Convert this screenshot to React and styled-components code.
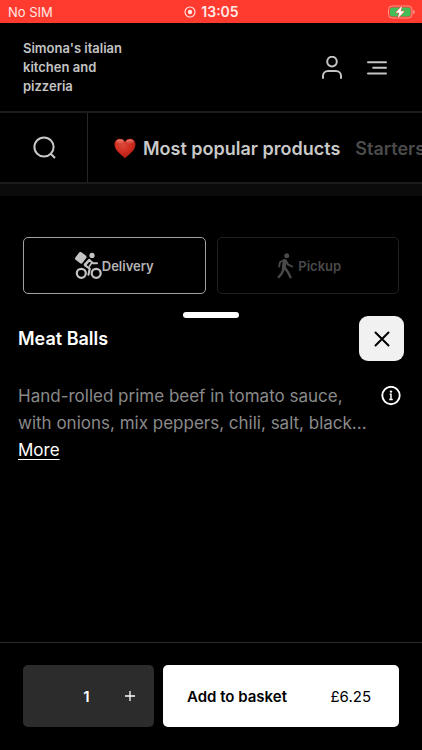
import React, { useState } from "react";
import styled, { createGlobalStyle } from "styled-components";

const GlobalStyle = createGlobalStyle`
  *, *::before, *::after { box-sizing: border-box; }
  body { margin: 0; background: #000; }
  button { font: inherit; color: inherit; background: none; border: 0; padding: 0; cursor: pointer; }
  h1, h2, p { margin: 0; }
  svg { display: block; flex: none; }
`;

const Page = styled.div`
  min-height: 100vh;
  display: flex;
  flex-direction: column;
  background: #000;
  color: #fff;
  font-family: Inter, "Liberation Sans", sans-serif;
  overflow: hidden;
`;

const StatusBar = styled.div`
  display: grid;
  grid-template-columns: 1fr auto 1fr;
  align-items: center;
  height: 23px;
  padding: 0 7px 0 8px;
  background: #ff3b30;
  color: #ffe9e6;
  font-size: 13px;
`;

const Clock = styled.div`
  display: flex;
  align-items: center;
  gap: 5px;
  font-size: 14px;
  font-weight: 600;
`;

const Battery = styled.div`
  justify-self: end;
`;

const Header = styled.header`
  display: flex;
  align-items: center;
  justify-content: space-between;
  padding: 16px 34px 15px 23px;
  border-bottom: 2px solid #1b1b1b;
  color: #c4c4c4;
`;

const Brand = styled.h1`
  max-width: 120px;
  font-size: 13px;
  line-height: 19px;
  font-weight: 600;
`;

const HeaderActions = styled.div`
  display: flex;
  gap: 23px;
`;

const IconButton = styled.button`
  display: flex;
  align-items: center;
  justify-content: center;
`;

const CategoryBar = styled.nav`
  display: flex;
  height: 71px;
  border-bottom: 2px solid #1b1b1b;
  color: #c9c9c9;
`;

const SearchButton = styled(IconButton)`
  flex: none;
  width: 88px;
  border-right: 1px solid #262626;
`;

const CategoryList = styled.div`
  display: flex;
  flex: 1;
  min-width: 0;
  align-items: center;
  gap: 15px;
  padding: 2px 0 0 26px;
  overflow-x: auto;
  scrollbar-width: none;
`;

const CategoryLink = styled.a`
  display: flex;
  flex: none;
  align-items: center;
  gap: 7px;
  font-size: 18px;
  line-height: 24px;
  font-weight: 600;
  text-decoration: none;
  white-space: nowrap;
  color: ${(p) => (p.$active ? "#c9c9c9" : "#4b4b4b")};
`;

const HeroStrip = styled.div`
  height: 12px;
  background: #0c0b0b;
`;

const ServiceOptions = styled.div`
  display: grid;
  grid-template-columns: 1fr 1fr;
  gap: 11px;
  padding: 41px 23px 18px;
`;

const ServiceButton = styled.button`
  display: flex;
  align-items: center;
  justify-content: center;
  height: 57px;
  border: 1px solid ${(p) => (p.$active ? "#a2a2a2" : "#202020")};
  border-radius: 5px;
  font-size: 13px;
  font-weight: 600;
  color: ${(p) => (p.$active ? "#b5b5b5" : "#4a4a4a")};
`;

const Sheet = styled.section`
  flex: 1;
  display: flex;
  flex-direction: column;
  padding: 0 18px;
`;

const Handle = styled.div`
  width: 56px;
  height: 6px;
  align-self: center;
  border-radius: 3px;
  background: #fff;
`;

const SheetHeader = styled.div`
  display: flex;
  align-items: center;
  justify-content: space-between;
  margin-top: -2px;
`;

const Title = styled.h2`
  font-size: 18px;
  line-height: 24px;
  font-weight: 600;
`;

const CloseButton = styled(IconButton)`
  width: 45px;
  height: 45px;
  border-radius: 9px;
  background: #f1f1f1;
  color: #000;
`;

const DescriptionRow = styled.div`
  display: flex;
  align-items: flex-start;
  gap: 6px;
  padding-top: 22px;
`;

const Description = styled.div`
  flex: 1;
  min-width: 0;
  font-size: 17px;
  line-height: 27px;
  color: #8a8a8a;
`;

const MoreLink = styled.a`
  color: #fff;
  text-decoration: underline;
  text-decoration-thickness: 1px;
  text-underline-offset: 3px;
`;

const InfoButton = styled(IconButton)`
  padding: 3px;
`;

const Footer = styled.footer`
  display: flex;
  gap: 9px;
  padding: 22px 23px 23px;
  border-top: 1px solid #2c2c2c;
  font-size: 15px;
`;

const Stepper = styled.div`
  flex: 0 0 131px;
  display: grid;
  grid-template-columns: 1fr 36px 1fr;
  align-items: center;
  height: 62px;
  border-radius: 5px;
  background: #2c2c2c;
`;

const StepButton = styled(IconButton)`
  height: 100%;
  visibility: ${(p) => (p.$hidden ? "hidden" : "visible")};
`;

const Quantity = styled.output`
  padding-right: 4px;
  text-align: center;
  font-weight: 600;
`;

const AddButton = styled.button`
  flex: 1;
  display: flex;
  align-items: center;
  justify-content: space-between;
  height: 62px;
  padding: 0 28px 0 24px;
  border-radius: 5px;
  background: #fff;
  color: #000;
`;

const AddLabel = styled.span`
  font-weight: 600;
`;

function RecordIcon() {
  return (
    <svg width="12" height="12" viewBox="0 0 12 12" aria-hidden="true">
      <circle cx="6" cy="6" r="5" fill="none" stroke="currentColor" strokeWidth="1.1" />
      <circle cx="6" cy="6" r="2.2" fill="currentColor" />
    </svg>
  );
}

function BatteryIcon() {
  return (
    <svg width="27" height="14" viewBox="0 0 27 14" role="img" aria-label="Battery charging">
      <rect x="0.5" y="1" width="23.5" height="12" rx="3.5" fill="none" stroke="#ffb0a9" strokeOpacity=".75" />
      <rect x="2" y="2.5" width="20.5" height="9" rx="2" fill="#43bd58" />
      <path d="M25.2 5v4c1.1-.4 1.6-1.1 1.6-2s-.5-1.6-1.6-2z" fill="#ff9d95" />
      <path d="M14 .8 7.7 7.7h3.6L9.8 13.2 16.5 6.3h-3.8z" fill="#fff" stroke="#ff3b30" strokeWidth=".9" paintOrder="stroke" />
    </svg>
  );
}

function UserIcon() {
  return (
    <svg width="22" height="24" viewBox="0 0 22 24" fill="none" stroke="currentColor" strokeWidth="2" strokeLinecap="round" aria-hidden="true">
      <circle cx="11" cy="5.6" r="4.8" />
      <path d="M2 22v-2a5 5 0 0 1 5-5h8a5 5 0 0 1 5 5v2" />
    </svg>
  );
}

function MenuIcon() {
  return (
    <svg width="22" height="24" viewBox="0 0 22 24" fill="none" stroke="currentColor" strokeWidth="2" strokeLinecap="round" aria-hidden="true">
      <path d="M2 6.2h18M7.2 11.8h12.8M2 17.4h18" />
    </svg>
  );
}

function SearchIcon() {
  return (
    <svg width="24" height="24" viewBox="0 0 24 24" fill="none" stroke="currentColor" strokeWidth="2" aria-hidden="true">
      <circle cx="12" cy="11" r="9.6" />
      <path d="m18.7 17.7 4.3 4.3" />
    </svg>
  );
}

function HeartIcon() {
  return (
    <svg width="22" height="21" viewBox="0 0 22 21" aria-hidden="true">
      <defs>
        <radialGradient id="heart" cx=".4" cy=".3" r=".8">
          <stop offset="0" stopColor="#d9493b" />
          <stop offset=".5" stopColor="#cf2b20" />
          <stop offset="1" stopColor="#a01a10" />
        </radialGradient>
        <linearGradient id="shine" x1="0" y1="0" x2="0" y2="1">
          <stop offset="0" stopColor="#f0a08f" stopOpacity=".75" />
          <stop offset="1" stopColor="#f0a08f" stopOpacity="0" />
        </linearGradient>
      </defs>
      <path d="M11 20.5C9.5 18 .5 13.5 .5 6.3 .5 3 2.8 .7 5.9 .7c2.3 0 4.1 1.2 5.1 3.2C12 1.9 13.8 .7 16.1 .7c3.1 0 5.4 2.3 5.4 5.6C21.5 13.5 12.5 18 11 20.5z" fill="url(#heart)" />
      <ellipse cx="6" cy="3.7" rx="3.6" ry="2.3" fill="url(#shine)" />
      <ellipse cx="16" cy="3.7" rx="3.6" ry="2.3" fill="url(#shine)" />
    </svg>
  );
}

function DeliveryIcon() {
  return (
    <svg width="27" height="28" viewBox="0 0 27 28" fill="none" stroke="#c4c4c4" strokeLinecap="round" strokeLinejoin="round" aria-hidden="true">
      <rect x="1.3" y="1" width="9" height="9.6" rx="2" transform="rotate(38 5.8 5.8)" fill="#c4c4c4" stroke="none" />
      <circle cx="17" cy="3.4" r="2.6" fill="#c4c4c4" stroke="none" />
      <circle cx="6.3" cy="21.3" r="4.5" strokeWidth="2.2" />
      <circle cx="21.2" cy="21.3" r="4.5" strokeWidth="2.2" />
      <path d="m14.2 8.2-4.2 5.2 4.7 3.2-1.2 6" strokeWidth="2.2" />
      <path d="m9.7 12.5 4.5-4.6 3.8 3.4h4" strokeWidth="2" />
      <path d="m16.7 11-2.3 3.3" strokeWidth="1.6" />
    </svg>
  );
}

function WalkIcon() {
  return (
    <svg width="24" height="26" viewBox="-3 0 24 26" fill="none" stroke="currentColor" strokeLinecap="round" strokeLinejoin="round" aria-hidden="true">
      <circle cx="9.7" cy="2.8" r="2.5" fill="currentColor" stroke="none" />
      <path d="M7.8 8 6.7 15.5" strokeWidth="4" />
      <path d="m8 15 3 4.2 2.5 5" strokeWidth="2.4" />
      <path d="m6 17.5-1.3 3-2.9 3.5" strokeWidth="2.3" />
      <path d="M6.5 7.2 3 9.2l-.8 4.3" strokeWidth="1.9" />
      <path d="m8.7 7.5 2.5 4.2 4 1.8" strokeWidth="1.9" />
    </svg>
  );
}

function CloseIcon() {
  return (
    <svg width="16" height="16" viewBox="0 0 16 16" fill="none" stroke="currentColor" strokeWidth="2" strokeLinecap="round" aria-hidden="true">
      <path d="m1.5 1.5 13 13m0-13-13 13" />
    </svg>
  );
}

function InfoIcon() {
  return (
    <svg width="20" height="20" viewBox="0 0 20 20" fill="none" stroke="#fff" aria-hidden="true">
      <circle cx="10" cy="9.5" r="8.7" strokeWidth="1.9" />
      <path d="M8.7 8.2H10v5.3M8.2 13.5h3.6" strokeWidth="1.5" />
      <circle cx="10" cy="5.6" r="1.2" fill="#fff" stroke="none" />
    </svg>
  );
}

function PlusIcon() {
  return (
    <svg width="10" height="10" viewBox="0 0 10 10" stroke="#fff" strokeWidth="1.3" aria-hidden="true">
      <path d="M5 0v10M0 5h10" />
    </svg>
  );
}

export default function App() {
  const [quantity, setQuantity] = useState(1);
  const [service, setService] = useState("delivery");

  return (
    <Page>
      <GlobalStyle />
      <StatusBar>
        <span>No SIM</span>
        <Clock>
          <RecordIcon />
          <span>13:05</span>
        </Clock>
        <Battery>
          <BatteryIcon />
        </Battery>
      </StatusBar>

      <Header>
        <Brand>Simona's italian kitchen and pizzeria</Brand>
        <HeaderActions>
          <IconButton type="button" aria-label="Account"><UserIcon /></IconButton>
          <IconButton type="button" aria-label="Menu"><MenuIcon /></IconButton>
        </HeaderActions>
      </Header>

      <CategoryBar aria-label="Categories">
        <SearchButton type="button" aria-label="Search"><SearchIcon /></SearchButton>
        <CategoryList>
          <CategoryLink href="#popular" $active>
            <HeartIcon />
            <span>Most popular products</span>
          </CategoryLink>
          <CategoryLink href="#starters">Starters</CategoryLink>
        </CategoryList>
      </CategoryBar>
      <HeroStrip />

      <ServiceOptions>
        <ServiceButton type="button" $active={service === "delivery"} onClick={() => setService("delivery")}>
          <DeliveryIcon />
          <span>Delivery</span>
        </ServiceButton>
        <ServiceButton type="button" $active={service === "pickup"} onClick={() => setService("pickup")}>
          <WalkIcon />
          <span>Pickup</span>
        </ServiceButton>
      </ServiceOptions>

      <Sheet aria-labelledby="product-title">
        <Handle />
        <SheetHeader>
          <Title id="product-title">Meat Balls</Title>
          <CloseButton type="button" aria-label="Close"><CloseIcon /></CloseButton>
        </SheetHeader>
        <DescriptionRow>
          <Description>
            <p>Hand-rolled prime beef in tomato sauce, with onions, mix peppers, chili, salt, black...</p>
            <MoreLink href="#more">More</MoreLink>
          </Description>
          <InfoButton type="button" aria-label="Product information"><InfoIcon /></InfoButton>
        </DescriptionRow>
      </Sheet>

      <Footer>
        <Stepper>
          <StepButton type="button" aria-label="Decrease quantity" $hidden={quantity <= 1} onClick={() => setQuantity(quantity - 1)}>−</StepButton>
          <Quantity>{quantity}</Quantity>
          <StepButton type="button" aria-label="Increase quantity" onClick={() => setQuantity(quantity + 1)}><PlusIcon /></StepButton>
        </Stepper>
        <AddButton type="button">
          <AddLabel>Add to basket</AddLabel>
          <span>£{(6.25 * quantity).toFixed(2)}</span>
        </AddButton>
      </Footer>
    </Page>
  );
}
